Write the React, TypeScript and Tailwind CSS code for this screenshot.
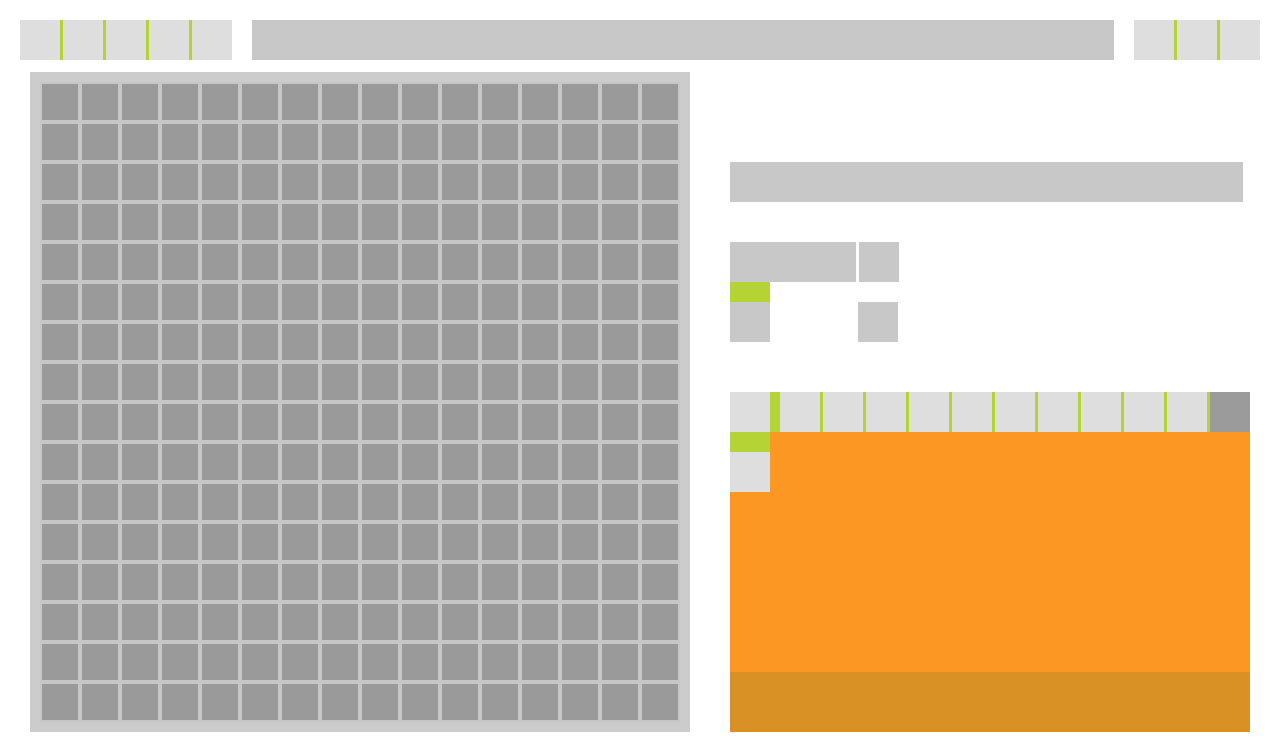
import React from "react";

const G = "bg-[#b5d334]";

function Seg({ n }: { n: number }) {
  return (
    <div className="flex h-10">
      {Array.from({ length: n }).map((_, i) => (
        <React.Fragment key={i}>
          {i > 0 && <div className="w-[3px] bg-[#b5d334]" />}
          <div className="w-10 bg-[#dedede]" />
        </React.Fragment>
      ))}
    </div>
  );
}

export default function App() {
  return (
    <div className="w-[1280px] h-[752px] bg-white overflow-hidden font-['Liberation_Sans',sans-serif]">
      <div className="flex gap-5 px-5 pt-5">
        <Seg n={5} />
        <div className="flex-1 h-10 bg-[#c8c8c8]" />
        <Seg n={3} />
      </div>
      <div className="flex mt-3 pl-[30px] gap-10">
        <div className="w-[660px] h-[660px] bg-[#cccccc] p-[10px]">
          <div className="grid grid-cols-16 bg-[#c6c6c6] w-[640px] h-[640px]">
            {Array.from({ length: 256 }).map((_, i) => (
              <div key={i} className="w-10 h-10 p-[2px]">
                <div className="w-full h-full bg-[#9a9a9a]" />
              </div>
            ))}
          </div>
        </div>
        <div className="flex flex-col w-[520px]">
          <div className="mt-[90px] w-[513px] h-10 bg-[#c8c8c8]" />
          <div className="mt-10 flex flex-col">
            <div className="flex gap-[3px]">
              <div className="w-[126px] h-10 bg-[#c8c8c8]" />
              <div className="w-10 h-10 bg-[#c8c8c8]" />
            </div>
            <div className={`w-10 h-5 ${G}`} />
            <div className="flex gap-[88px]">
              <div className="w-10 h-10 bg-[#c8c8c8]" />
              <div className="w-10 h-10 bg-[#c8c8c8]" />
            </div>
          </div>
          <div className="mt-[50px] flex h-10">
            <div className="w-10 bg-[#dedede]" />
            <div className={`w-[10px] ${G}`} />
            {Array.from({ length: 10 }).map((_, i) => (
              <React.Fragment key={i}>
                <div className="w-10 bg-[#dedede]" />
                <div className="w-[3px] bg-[#b5d334]" />
              </React.Fragment>
            ))}
            <div className="w-10 bg-[#9b9b9b]" />
          </div>
          <div className="flex flex-col bg-[#fb9722]">
            <div className="h-[240px] flex flex-col">
              <div className={`w-10 h-5 ${G}`} />
              <div className="w-10 h-10 bg-[#dedede]" />
            </div>
            <div className="h-[60px] bg-[#d99126]" />
          </div>
        </div>
      </div>
    </div>
  );
}
